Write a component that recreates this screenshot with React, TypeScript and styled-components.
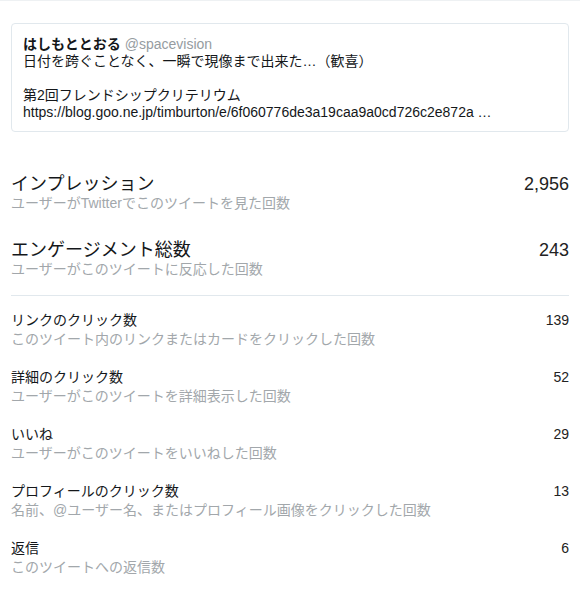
import styled, { createGlobalStyle } from "styled-components";

const GlobalStyle = createGlobalStyle`
  body {
    margin: 0;
    background: #fff;
    font-family: "Liberation Sans", Arial, "Noto Sans CJK JP", sans-serif;
    color: #14171a;
  }
`;

const Page = styled.div`
  width: 580px;
  height: 590px;
  box-sizing: border-box;
  border-top: 1px solid #eef1f3;
  padding: 22px 11px 0 11px;
  overflow: hidden;
`;

const TweetCard = styled.div`
  border: 1px solid #e1e8ed;
  border-radius: 4px;
  padding: 12px 11px 10px 11px;
  font-size: 14px;
  line-height: 17px;
`;

const Name = styled.span`
  font-weight: bold;
  font-size: 14px;
`;

const Handle = styled.span`
  color: #969ca1;
  margin-left: 4px;
`;

const TweetText = styled.p`
  margin: 0;
  white-space: pre-line;
`;

const Group = styled.div<{ $big?: boolean }>`
  display: flex;
  flex-direction: column;
  gap: ${(p) => (p.$big ? "27px" : "19px")};
  padding-top: ${(p) => (p.$big ? "42px" : "15px")};
  padding-bottom: ${(p) => (p.$big ? "16px" : "0")};
`;

const Row = styled.div`
  display: flex;
  justify-content: space-between;
  align-items: flex-start;
`;

const Label = styled.div<{ $big?: boolean }>`
  font-size: ${(p) => (p.$big ? "18px" : "14px")};
  line-height: ${(p) => (p.$big ? "20px" : "19px")};
`;

const Hint = styled.div`
  font-size: 14px;
  line-height: 19px;
  color: #a2a7ab;
`;

const Value = styled.div<{ $big?: boolean }>`
  font-size: ${(p) => (p.$big ? "18px" : "14px")};
  line-height: ${(p) => (p.$big ? "20px" : "19px")};
  color: #222;
`;

const Divider = styled.hr`
  border: none;
  border-top: 1px solid #e1e8ed;
  margin: 0;
`;

type Metric = { label: string; hint: string; value: string };

const big: Metric[] = [
  { label: "インプレッション", hint: "ユーザーがTwitterでこのツイートを見た回数", value: "2,956" },
  { label: "エンゲージメント総数", hint: "ユーザーがこのツイートに反応した回数", value: "243" },
];

const small: Metric[] = [
  { label: "リンクのクリック数", hint: "このツイート内のリンクまたはカードをクリックした回数", value: "139" },
  { label: "詳細のクリック数", hint: "ユーザーがこのツイートを詳細表示した回数", value: "52" },
  { label: "いいね", hint: "ユーザーがこのツイートをいいねした回数", value: "29" },
  { label: "プロフィールのクリック数", hint: "名前、@ユーザー名、またはプロフィール画像をクリックした回数", value: "13" },
  { label: "返信", hint: "このツイートへの返信数", value: "6" },
];

export default function App() {
  return (
    <Page>
      <GlobalStyle />
      <TweetCard>
        <div>
          <Name>はしもととおる</Name>
          <Handle>@spacevision</Handle>
        </div>
        <TweetText>
          {"日付を跨ぐことなく、一瞬で現像まで出来た…（歓喜）\n\n第2回フレンドシップクリテリウム\nhttps://blog.goo.ne.jp/timburton/e/6f060776de3a19caa9a0cd726c2e872a …"}
        </TweetText>
      </TweetCard>
      <Group $big>
        {big.map((m) => (
          <Row key={m.label}>
            <div>
              <Label $big>{m.label}</Label>
              <Hint>{m.hint}</Hint>
            </div>
            <Value $big>{m.value}</Value>
          </Row>
        ))}
      </Group>
      <Divider />
      <Group>
        {small.map((m) => (
          <Row key={m.label}>
            <div>
              <Label>{m.label}</Label>
              <Hint>{m.hint}</Hint>
            </div>
            <Value>{m.value}</Value>
          </Row>
        ))}
      </Group>
    </Page>
  );
}
